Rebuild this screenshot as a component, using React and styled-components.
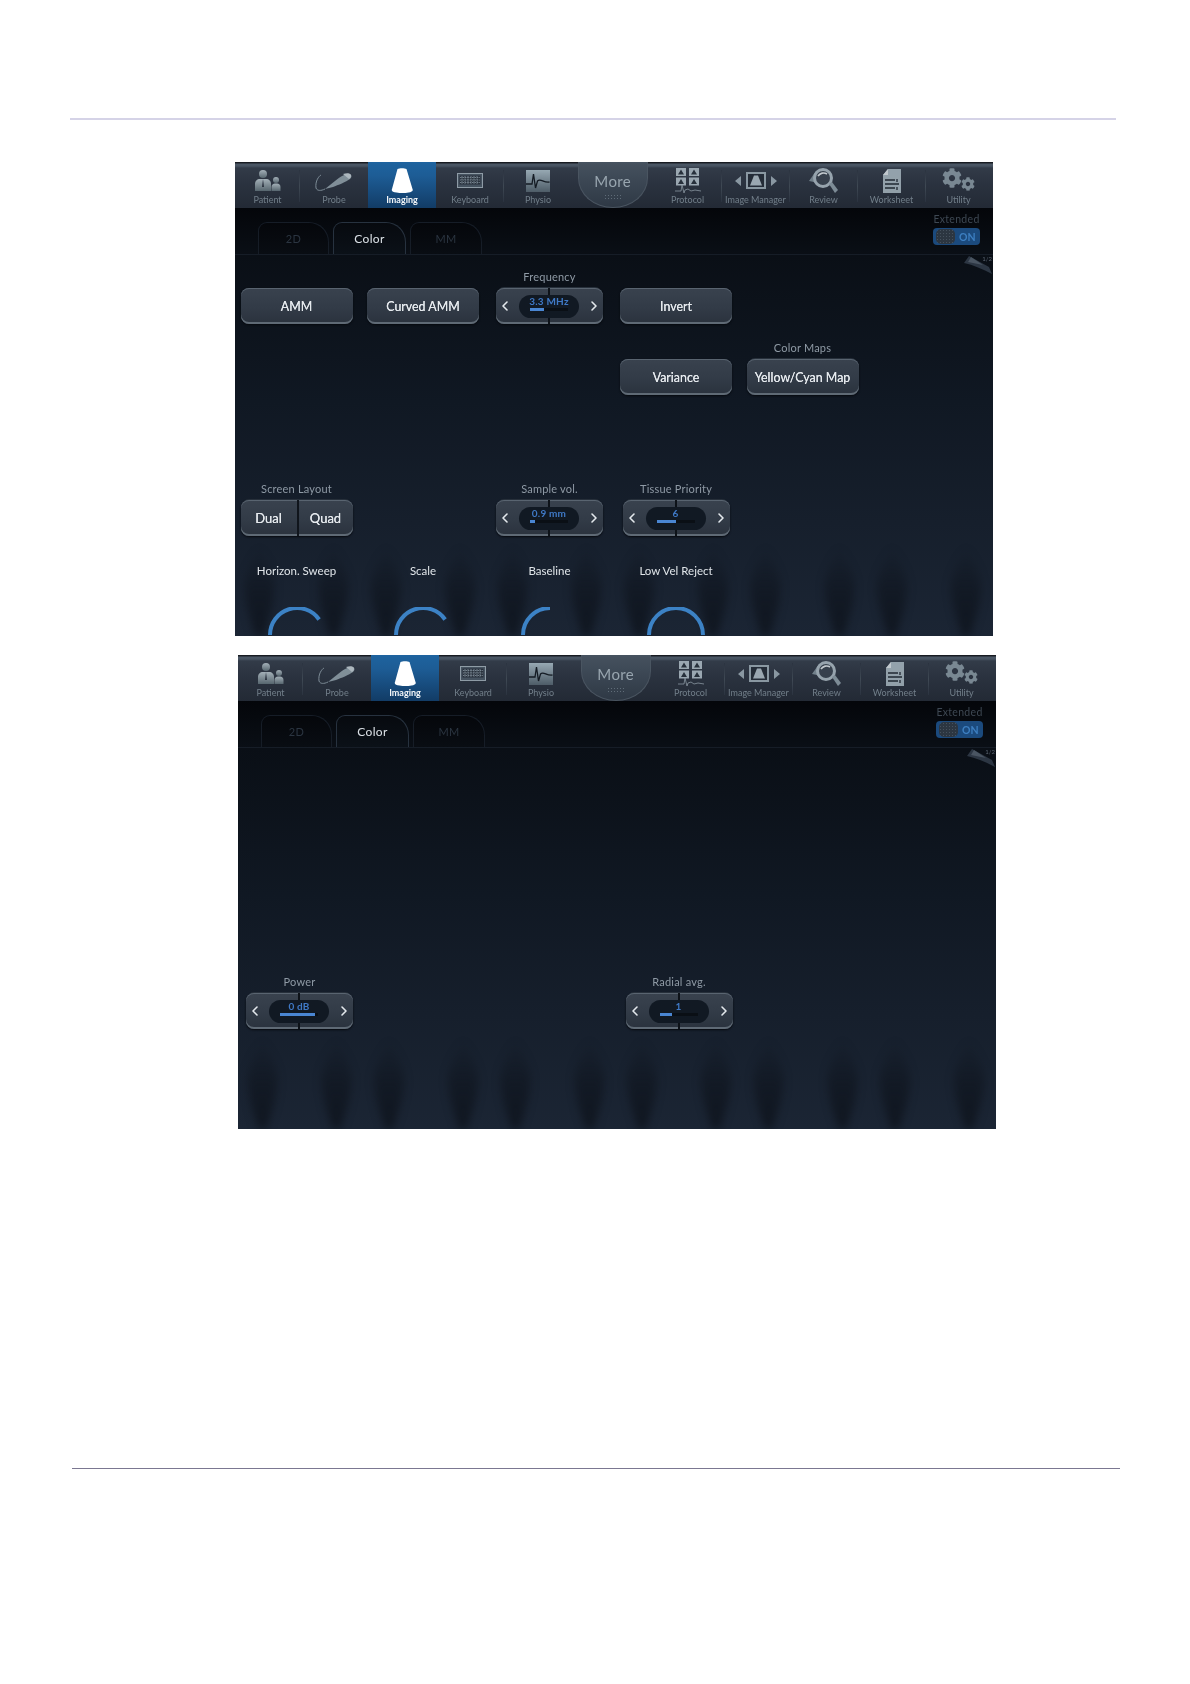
import React from "react";
import styled, { createGlobalStyle } from "styled-components";
import { ChevronLeft, ChevronRight } from "lucide-react";
import { FaCog } from "react-icons/fa";

const Global = createGlobalStyle`
  html, body { margin: 0; padding: 0; background: #fff; }
  body { font-family: "Lato", "Noto Sans", sans-serif; }
`;

const Page = styled.div`
  width: 1190px;
  height: 1684px;
  padding-top: 118px;
  box-sizing: border-box;
  background: #fff;
  overflow: hidden;
`;
const Rule = styled.div`
  width: ${(p) => p.$w}px;
  height: ${(p) => p.$h}px;
  margin-left: ${(p) => p.$left}px;
  margin-top: ${(p) => p.$top}px;
  background: ${(p) => p.$color};
`;
const Panel = styled.section`
  position: relative;
  width: ${(p) => p.$w}px;
  height: 474px;
  margin-left: ${(p) => p.$left}px;
  margin-top: ${(p) => p.$top}px;
  overflow: hidden;
  filter: blur(0.45px);
  background: linear-gradient(180deg, #020305 0, #04060a 46px, #0a0f16 93px, #101823 240px, #161f2c 360px, #1b2534 474px);
`;
const Toolbar = styled.nav`
  position: relative;
  display: grid;
  grid-template-columns: 65px 68px 68px 68px 68px 81.5px 68px 68px 68px 68px 66px;
  height: 46px;
  background: linear-gradient(180deg, #14171c 0, #1b1f26 1px, #4b5765 2px, #475361 4px, #323b48 6px, #2b3340 20px, #232a35 46px);
`;
const ToolItem = styled.div`
  position: relative;
  display: flex;
  flex-direction: column;
  align-items: center;
  padding-top: 6px;
  box-sizing: border-box;
  background: ${(p) => (p.$active ? "linear-gradient(180deg, #1e639f 0, #1d5c95 14px, #123c66 46px)" : "transparent")};
  &::after {
    content: "";
    display: ${(p) => (p.$sep ? "block" : "none")};
    position: absolute;
    right: 0;
    top: 8px;
    bottom: 6px;
    width: 1px;
    background: linear-gradient(180deg, #2b3340, #3f4954 50%, #2b3340);
  }
`;
const ToolIcon = styled.div`
  height: 26px;
  display: flex;
  align-items: center;
  justify-content: center;
  color: #8797a1;
  opacity: ${(p) => (p.$active ? 1 : 0.85)};
`;
const ToolLabel = styled.span`
  font-size: 9px;
  line-height: 11px;
  color: ${(p) => (p.$active ? "#f4f7f9" : "#727f8a")};
  font-weight: ${(p) => (p.$active ? 700 : 400)};
  white-space: nowrap;
`;
const MoreDisc = styled.div`
  width: 70px;
  height: 46px;
  margin: 0 auto;
  box-sizing: border-box;
  display: flex;
  flex-direction: column;
  align-items: center;
  padding-top: 11px;
  border: 1px solid #4a5561;
  border-top: none;
  border-radius: 0 0 35px 35px / 0 0 30px 30px;
  background: linear-gradient(180deg, #46525f 0, #3a4552 50%, #2f3945 100%);
`;
const MoreText = styled.span`
  font-size: 15px;
  line-height: 16px;
  color: #98a5af;
  letter-spacing: 0.4px;
`;
const MoreDots = styled.span`
  margin-top: 5px;
  width: 18px;
  height: 6px;
  background-image: radial-gradient(#5f6c78 0.8px, transparent 1px);
  background-size: 3px 3px;
`;
const TabBar = styled.div`
  display: flex;
  justify-content: space-between;
  height: 47px;
  box-sizing: border-box;
  border-bottom: 1px solid #161d27;
  padding-left: 23px;
  padding-right: 13px;
`;
const Tabs = styled.div`
  display: flex;
  align-items: flex-end;
  gap: 4px;
`;
const Tab = styled.div`
  width: ${(p) => p.$w}px;
  height: 32px;
  box-sizing: border-box;
  display: flex;
  align-items: center;
  justify-content: center;
  font-size: ${(p) => (p.$active ? 12 : 11)}px;
  letter-spacing: 0.4px;
  color: ${(p) => (p.$active ? "#dbe1e6" : "#2b3541")};
  border: 1px solid ${(p) => (p.$active ? "#27323f" : "#161d27")};
  border-bottom: none;
  border-radius: 9px 20px 0 0;
  background: ${(p) => (p.$active ? "linear-gradient(180deg,#070a0f,#0b1118)" : "linear-gradient(180deg,#05070b,#090d13)")};
`;
const ToggleBlock = styled.div`
  display: flex;
  flex-direction: column;
  align-items: center;
  padding-top: 5px;
`;
const ToggleLabel = styled.span`
  font-size: 10.5px;
  line-height: 12px;
  color: #3e4853;
  letter-spacing: 0.3px;
`;
const Toggle = styled.div`
  margin-top: 3px;
  width: 47px;
  height: 17px;
  display: flex;
  align-items: center;
  border-radius: 4px;
  background: #1b4a7d;
`;
const ToggleKnob = styled.span`
  width: 19px;
  height: 15px;
  margin-left: 3px;
  border-radius: 5px;
  background-color: #2c3641;
  background-image: radial-gradient(#46525e 0.7px, transparent 1px);
  background-size: 3px 3px;
`;
const ToggleOn = styled.span`
  margin-left: 4px;
  font-size: 10.5px;
  font-weight: 700;
  color: #3d7fc1;
`;
const Curl = styled.svg`
  position: absolute;
  top: 93px;
  right: 0;
  width: 30px;
  height: 20px;
`;
const CurlText = styled.span`
  position: absolute;
  top: 93px;
  right: 1px;
  font-size: 6px;
  color: #5a6470;
`;
const Blades = styled.svg`
  position: absolute;
  left: 0;
  bottom: 0;
  width: 758px;
  height: 90px;
  filter: blur(4px);
`;
const Grid = styled.div`
  position: relative;
  display: grid;
  grid-template-columns: repeat(6, 126.5px);
  grid-template-rows: 69px 71px 70px 71px 101px;
  padding-left: 5.5px;
`;
const Cell = styled.div`
  grid-column: ${(p) => p.$col};
  grid-row: ${(p) => p.$row};
  width: 112px;
  display: flex;
  flex-direction: column;
  align-items: center;
  justify-content: ${(p) => (p.$top ? "flex-start" : "flex-end")};
`;
const SmallLabel = styled.span`
  font-size: 11px;
  line-height: 14px;
  margin-bottom: 4px;
  color: #8f9aa5;
  white-space: nowrap;
  letter-spacing: 0.2px;
`;
const Raised = styled.div`
  height: 36px;
  border-radius: 8px;
  background: linear-gradient(180deg, #39424e 0, #323b47 55%, #2a323d 100%);
  box-shadow: inset 0 1px 0 #596470, inset 0 -2px 0 #5f6a75, 0 -2px 0 -1px ${(p) => (p.$group ? "#27303b" : "transparent")}, 0 1px 2px #06090e;
`;
const Button = styled(Raised)`
  width: 112px;
  display: flex;
  align-items: center;
  justify-content: center;
  font-size: 12.4px;
  color: #e6eaee;
  text-shadow: 0 0 0.6px #e6eaee;
  white-space: nowrap;
`;
const Segmented = styled(Raised)`
  width: 112px;
  display: grid;
  grid-template-columns: 56px 56px;
`;
const Segment = styled.div`
  display: flex;
  align-items: center;
  justify-content: center;
  font-size: 13px;
  color: #e6eaee;
  text-shadow: 0 0 0.6px #e6eaee;
  border-left: ${(p) => (p.$divided ? "2px solid #10151c" : "none")};
`;
const Stepper = styled(Raised)`
  position: relative;
  width: 107px;
  display: flex;
  align-items: center;
  justify-content: space-between;
  padding: 0 1px;
  box-sizing: border-box;
  color: #e4e9ed;
  &::after {
    content: "";
    position: absolute;
    left: 52px;
    top: 0;
    bottom: 0;
    width: 2px;
    background: #0d1218;
  }
`;
const Pill = styled.div`
  position: absolute;
  z-index: 1;
  left: 23px;
  top: 7px;
  width: 60px;
  height: 23px;
  border-radius: 12px;
  background: #111923;
  display: flex;
  flex-direction: column;
  align-items: center;
`;
const PillValue = styled.span`
  font-size: 10px;
  line-height: 11px;
  margin-top: 1px;
  font-weight: 700;
  color: #3f79c6;
  letter-spacing: 0.2px;
`;
const Track = styled.div`
  width: 38px;
  height: 3px;
  margin-top: 1px;
  background: #0a0f15;
`;
const Fill = styled.div`
  height: 100%;
  background: #4a86d2;
`;
const KnobCell = styled(Cell)`
  padding-top: 27px;
`;
const KnobLabel = styled.span`
  font-size: 11.5px;
  line-height: 16px;
  color: #e0e5e9;
  white-space: nowrap;
`;
const KnobArc = styled.svg`
  margin-top: 28px;
  width: 62px;
  height: 36px;
  flex: none;
`;

const Patient = () => (
  <svg width="30" height="24" viewBox="0 0 30 24">
    <defs><linearGradient id="pg" x1="0" y1="0" x2="0" y2="1"><stop offset="0" stopColor="#b9c6cd" /><stop offset="1" stopColor="#5f7078" /></linearGradient></defs>
    <circle cx="10" cy="5" r="4" fill="url(#pg)" />
    <path d="M2 22v-7c0-3 2-5 5-5h6c3 0 5 2 5 5v7z" fill="url(#pg)" />
    <path d="M10 10l-1 8h2z" fill="#2b3340" />
    <circle cx="23" cy="11" r="3" fill="url(#pg)" />
    <path d="M18.5 22v-4c0-2 1.500-3.500 3.500-3.500h2c2 0 3.500 1.500 3.500 3.500v4z" fill="url(#pg)" />
  </svg>
);
const Probe = () => (
  <svg width="38" height="24" viewBox="0 0 38 24">
    <path d="M1 19C0 12 4 7 6 6M1 19c1 3 5 3 9 1" fill="none" stroke="#8c9ca6" strokeWidth="1" />
    <path d="M10 20l10-8c6-5 12-8 15-7 2 1 2 3 0 5-4 3-12 6-17 8z" fill="#8f9fa8" />
    <path d="M28 5c3-1 6-1 7 0 2 1 1 4-1 5z" fill="#c3ced4" />
  </svg>
);
const Imaging = () => (
  <svg width="22" height="26" viewBox="0 0 22 26">
    <path d="M6.500 1c2-1 7-1 9 0l6 20c1 2-1 3-4 3.500-4 .7-8 .7-12 0C2 24 0 23 1 21z" fill="#fff" />
  </svg>
);
const Keyboard = () => (
  <svg width="26" height="16" viewBox="0 0 26 16">
    <rect x=".5" y=".5" width="25" height="14" fill="#4b5966" stroke="#a0aeb8" />
    <rect x="2.500" y="2.500" width="21" height="9" fill="#28313c" />
    <path d="M3 4.500h20M3 7h20M3 9.500h20M5 3v8M8 3v8M11 3v8M14 3v8M17 3v8M20 3v8" stroke="#98a7b2" strokeWidth=".8" strokeDasharray="1.600 .8" />
  </svg>
);
const Physio = () => (
  <svg width="24" height="22" viewBox="0 0 24 22">
    <defs><linearGradient id="ph" x1="0" y1="0" x2="0" y2="1"><stop offset="0" stopColor="#a9bcc6" /><stop offset="1" stopColor="#556570" /></linearGradient></defs>
    <rect width="24" height="22" fill="url(#ph)" />
    <path d="M0 14h6l1.500-10 2 14 2-7c3-3 6 2 12 1" fill="none" stroke="#10171f" strokeWidth="1.300" />
  </svg>
);
const Protocol = () => (
  <svg width="26" height="26" viewBox="0 0 26 26">
    <rect x="1" y="0" width="10" height="8" fill="#aebcc5" />
    <rect x="14" y="0" width="10" height="8" fill="#aebcc5" />
    <rect x="1" y="9.500" width="10" height="8" fill="#aebcc5" />
    <rect x="14" y="9.500" width="10" height="8" fill="#aebcc5" />
    <path d="M6 1.500l3 5H3zM19 1.500l3 5h-6zM6 11l3 5H3zM19 11l3 5h-6z" fill="#27303b" />
    <path d="M0 23h6l1-6 2 8 1-3 3-1 3 2 4-1 6 1" fill="none" stroke="#9aa8b2" strokeWidth=".8" />
  </svg>
);
const ImageManager = () => (
  <svg width="42" height="20" viewBox="0 0 42 20">
    <path d="M6 5v10l-6-5zM36 5v10l6-5z" fill="#9aa9b3" />
    <rect x="11" y="1" width="20" height="17" fill="#9aa9b3" />
    <rect x="13" y="3" width="16" height="13" fill="#232b36" />
    <path d="M19 4.500h4l4 10H15z" fill="#aebcc5" />
  </svg>
);
const Review = () => (
  <svg width="30" height="28" viewBox="0 0 30 28">
    <path d="M0 14L7 4l3 12z" fill="#7e8e98" />
    <circle cx="14" cy="11" r="8.500" fill="#39434f" stroke="#a9b7c0" strokeWidth="3" />
    <path d="M9 9c2-3 6-4 9-2" fill="none" stroke="#dde4e8" strokeWidth="1.600" />
    <path d="M20 17l3-2 6 8-3 3z" fill="#8c9ca6" />
  </svg>
);
const Worksheet = () => (
  <svg width="20" height="26" viewBox="0 0 20 26">
    <path d="M6 1h13v24H1V7z" fill="#a5b4bd" />
    <path d="M6 1v6H1z" fill="#dbe2e6" />
    <path d="M3 12h10M15 11v3M3 16h14M3 20h10M15 19v3" stroke="#1f2731" strokeWidth="1.300" />
  </svg>
);
const Utility = () => (
  <>
    <FaCog size={20} style={{ marginTop: -7 }} />
    <FaCog size={14} style={{ marginLeft: -1, marginTop: 6 }} />
  </>
);

const tools = [
  ["Patient", Patient, true],
  ["Probe", Probe, false],
  ["Imaging", Imaging, false, true],
  ["Keyboard", Keyboard, true],
  ["Physio", Physio, false],
  null,
  ["Protocol", Protocol, true],
  ["Image Manager", ImageManager, true],
  ["Review", Review, true],
  ["Worksheet", Worksheet, true],
  ["Utility", Utility, false],
];

const TopBar = () => (
  <Toolbar>
    {tools.map((t) => {
      if (!t)
        return (
          <MoreDisc key="more">
            <MoreText>More</MoreText>
            <MoreDots />
          </MoreDisc>
        );
      const [name, Icon, sep, active] = t;
      return (
        <ToolItem key={name} $sep={sep} $active={active}>
          <ToolIcon $active={active}><Icon /></ToolIcon>
          <ToolLabel $active={active}>{name}</ToolLabel>
        </ToolItem>
      );
    })}
  </Toolbar>
);

const TabRow = () => (
  <TabBar>
    <Tabs>
      <Tab $w={71}>2D</Tab>
      <Tab $w={73} $active>Color</Tab>
      <Tab $w={72}>MM</Tab>
    </Tabs>
    <ToggleBlock>
      <ToggleLabel>Extended</ToggleLabel>
      <Toggle>
        <ToggleKnob />
        <ToggleOn>ON</ToggleOn>
      </Toggle>
    </ToggleBlock>
  </TabBar>
);

const PageCurl = () => (
  <>
    <Curl viewBox="0 0 30 20">
      <path d="M6 1l20 11 3 7C20 14 10 10 1 8z" fill="#2c3643" />
      <path d="M8 2l12 8-15-3z" fill="#4a5562" />
    </Curl>
    <CurlText>1/2</CurlText>
  </>
);

const BladeArt = () => {
  const centres = [61.5, 188, 314.5, 441, 567.5, 694];
  const xs = centres.flatMap((c) => [c - 37, c + 37]);
  return (
    <Blades viewBox="0 0 758 90">
      <defs>
        <linearGradient id="bl" x1="0" y1="0" x2="0" y2="1">
          <stop offset="0" stopColor="#0c1119" stopOpacity="0" />
          <stop offset=".5" stopColor="#0c1119" stopOpacity=".5" />
          <stop offset="1" stopColor="#0c1119" stopOpacity=".75" />
        </linearGradient>
      </defs>
      {xs.map((x) => (
        <path
          key={x}
          fill="url(#bl)"
          d={`M${x} 0C${x - 6} 15 ${x - 15} 25 ${x - 15} 42C${x - 14} 62 ${x - 7} 78 ${x - 4} 90L${x + 4} 90C${x + 7} 78 ${x + 14} 62 ${x + 15} 42C${x + 15} 25 ${x + 6} 15 ${x} 0Z`}
        />
      ))}
    </Blades>
  );
};

const StepControl = ({ col, row, label, value, pct }) => (
  <Cell $col={col} $row={row}>
    <SmallLabel>{label}</SmallLabel>
    <Stepper $group>
      <ChevronLeft size={16} strokeWidth={2.4} />
      <Pill>
        <PillValue>{value}</PillValue>
        <Track><Fill style={{ width: `${pct}%` }} /></Track>
      </Pill>
      <ChevronRight size={16} strokeWidth={2.4} />
    </Stepper>
  </Cell>
);

const Knob = ({ col, label, end }) => {
  const r = 27;
  const a = (end * Math.PI) / 180;
  const x = 31 + r * Math.cos(a);
  const y = 28 - r * Math.sin(a);
  return (
    <KnobCell $col={col} $row={5} $top>
      <KnobLabel>{label}</KnobLabel>
      <KnobArc viewBox="0 0 62 36">
        <path d={`M4 28A${r} ${r} 0 0 1 ${x} ${y}`} fill="none" stroke="#3c82c5" strokeWidth="4" />
      </KnobArc>
    </KnobCell>
  );
};

export default function App() {
  return (
    <Page>
      <Global />
      <Rule $w={1046} $h={2} $left={70} $top={0} $color="#d5d3e7" />
      <Panel $w={758} $left={235} $top={42}>
        <BladeArt />
        <TopBar />
        <TabRow />
        <PageCurl />
        <Grid>
          <Cell $col={1} $row={1}><Button>AMM</Button></Cell>
          <Cell $col={2} $row={1}><Button>Curved AMM</Button></Cell>
          <StepControl col={3} row={1} label="Frequency" value="3.3 MHz" pct={36} />
          <Cell $col={4} $row={1}><Button>Invert</Button></Cell>
          <Cell $col={4} $row={2}><Button>Variance</Button></Cell>
          <Cell $col={5} $row={2}>
            <SmallLabel>Color Maps</SmallLabel>
            <Button $group>Yellow/Cyan Map</Button>
          </Cell>
          <Cell $col={1} $row={4}>
            <SmallLabel>Screen Layout</SmallLabel>
            <Segmented $group>
              <Segment>Dual</Segment>
              <Segment $divided>Quad</Segment>
            </Segmented>
          </Cell>
          <StepControl col={3} row={4} label="Sample vol." value="0.9 mm" pct={13} />
          <StepControl col={4} row={4} label="Tissue Priority" value="6" pct={50} />
          <Knob col={1} label="Horizon. Sweep" end={35} />
          <Knob col={2} label="Scale" end={35} />
          <Knob col={3} label="Baseline" end={90} />
          <Knob col={4} label="Low Vel Reject" end={0} />
        </Grid>
      </Panel>
      <Panel $w={758} $left={238} $top={19}>
        <BladeArt />
        <TopBar />
        <TabRow />
        <PageCurl />
        <Grid>
          <StepControl col={1} row={4} label="Power" value="0 dB" pct={92} />
          <StepControl col={4} row={4} label="Radial avg." value="1" pct={34} />
        </Grid>
      </Panel>
      <Rule $w={1048} $h={1} $left={72} $top={339} $color="#7b7791" />
    </Page>
  );
}
